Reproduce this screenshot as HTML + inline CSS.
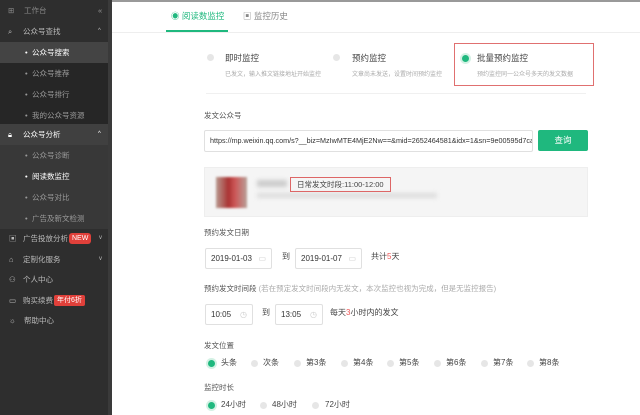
<!DOCTYPE html>
<html><head><meta charset="utf-8"><style>
*{margin:0;padding:0;box-sizing:border-box}
body{width:640px;height:415px;overflow:hidden;background:#fff;font-family:"Liberation Sans","Noto Sans CJK SC",sans-serif;position:relative}
.sb{position:absolute;left:0;top:0;width:108px;height:415px;background:#2e2e2e}
.sb2{position:absolute;left:108px;top:0;width:4px;height:415px;background:#3a3a3a}
.it{position:absolute;left:0;width:108px;height:21px;line-height:21px;font-size:7.5px;color:#bbb}
.sub{background:#262626}
.t{position:absolute;color:#444;white-space:nowrap}
.a{position:absolute}
.r{position:absolute;width:7px;height:7px;border-radius:50%;background:#e6e6e6}
.r.on{background:#1fb87e;box-shadow:0 0 0 2px #d3f1e4}
.in{position:absolute;border:1px solid #e0e0e0;border-radius:2px;font-size:8px;color:#333;background:#fff}
</style></head><body>
<div class="sb"></div><div class="sb2"></div>
<div class="it" style="top:0"><span class="a" style="left:8px;color:#888">⊞</span><span class="a" style="left:24px;color:#888">工作台</span><span class="a" style="left:98px;color:#999">«</span></div>
<div class="it" style="top:21px"><span class="a" style="left:8px">⌕</span><span class="a" style="left:23px">公众号查找</span><span class="a" style="left:98px;font-size:6px">^</span></div>
<div class="it sub" style="top:42px;background:#444;color:#fff"><span class="a" style="left:25px">•</span><span class="a" style="left:32px">公众号搜索</span></div>
<div class="it sub" style="top:63px;color:#999"><span class="a" style="left:25px">•</span><span class="a" style="left:32px">公众号推荐</span></div>
<div class="it sub" style="top:84px;color:#999"><span class="a" style="left:25px">•</span><span class="a" style="left:32px">公众号排行</span></div>
<div class="it sub" style="top:105px;color:#999"><span class="a" style="left:25px">•</span><span class="a" style="left:32px">我的公众号资源</span></div>
<div class="it" style="top:124px;height:21px;background:#404040;color:#fff"><span class="a" style="left:8px">🔒︎</span><span class="a" style="left:23px">公众号分析</span><span class="a" style="left:98px;font-size:6px">^</span></div>
<div class="it" style="top:145px;background:#383838;color:#999"><span class="a" style="left:25px">•</span><span class="a" style="left:32px">公众号诊断</span></div>
<div class="it" style="top:166px;background:#383838;color:#fff"><span class="a" style="left:25px">•</span><span class="a" style="left:32px">阅读数监控</span></div>
<div class="it" style="top:187px;background:#383838;color:#999"><span class="a" style="left:25px">•</span><span class="a" style="left:32px">公众号对比</span></div>
<div class="it" style="top:208px;background:#383838;color:#999"><span class="a" style="left:25px">•</span><span class="a" style="left:32px">广告及新文检测</span></div>
<div class="it" style="top:228px"><span class="a" style="left:9px">▣</span><span class="a" style="left:23px">广告投放分析</span><span class="a" style="left:69px;top:5px;height:11px;line-height:11px;padding:0 3px;background:#e0403a;color:#fff;border-radius:3px;font-size:7px">NEW</span><span class="a" style="left:99px;font-size:6px">v</span></div>
<div class="it" style="top:249px"><span class="a" style="left:9px">⌂</span><span class="a" style="left:23px">定制化服务</span><span class="a" style="left:99px;font-size:6px">v</span></div>
<div class="it" style="top:269px"><span class="a" style="left:9px">⚇</span><span class="a" style="left:23px">个人中心</span></div>
<div class="it" style="top:290px"><span class="a" style="left:9px">▭</span><span class="a" style="left:23px">购买续费</span><span class="a" style="left:54px;top:5px;height:11px;line-height:11px;padding:0 3px;background:#e0403a;color:#fff;border-radius:2px;font-size:7px">年付6折</span></div>
<div class="it" style="top:310px"><span class="a" style="left:9px">☼</span><span class="a" style="left:24px">帮助中心</span></div>

<div class="a" style="left:112px;top:0;width:528px;height:2px;background:#999"></div>
<div class="a" style="left:112px;top:32px;width:528px;height:1px;background:#eee"></div>
<div class="t" style="left:171px;top:10px;font-size:8.5px;color:#1fb87e">◉ 阅读数监控</div>
<div class="a" style="left:166px;top:30px;width:62px;height:2px;background:#1fb87e"></div>
<div class="t" style="left:243px;top:10px;font-size:8.5px;color:#888">▣ 监控历史</div>

<div class="r" style="left:207px;top:54px"></div>
<div class="t" style="left:225px;top:52px;font-size:8.5px">即时监控</div>
<div class="t" style="left:225px;top:69px;font-size:6px;color:#aaa">已发文，输入推文链接地址开始监控</div>
<div class="r" style="left:333px;top:54px"></div>
<div class="t" style="left:352px;top:52px;font-size:8.5px">预约监控</div>
<div class="t" style="left:352px;top:69px;font-size:6px;color:#aaa">文章尚未发送，设置时间预约监控</div>
<div class="a" style="left:454px;top:43px;width:140px;height:43px;border:1px solid #e07070"></div>
<div class="r on" style="left:462px;top:55px"></div>
<div class="t" style="left:477px;top:52px;font-size:8.5px">批量预约监控</div>
<div class="t" style="left:477px;top:69px;font-size:6px;color:#aaa">预约监控同一公众号多天的发文数据</div>
<div class="a" style="left:206px;top:93px;width:380px;height:1px;background:#f0f0f0"></div>

<div class="t" style="left:204px;top:110px;font-size:7.5px;color:#555">发文公众号</div>
<div class="in" style="left:204px;top:130px;width:329px;height:22px;line-height:20px;padding-left:5px;font-size:7.2px;white-space:nowrap;overflow:hidden">https://mp.weixin.qq.com/s?__biz=MzIwMTE4MjE2Nw==&amp;mid=2652464581&amp;idx=1&amp;sn=9e00595d7ca</div>
<div class="a" style="left:538px;top:130px;width:50px;height:21px;background:#1fb87e;border-radius:2px;color:#fff;font-size:8.5px;text-align:center;line-height:21px">查询</div>
<div class="a" style="left:204px;top:167px;width:384px;height:50px;background:#f5f5f5;border:1px solid #eee"></div>
<div class="a" style="left:216px;top:177px;width:31px;height:31px;background:linear-gradient(90deg,#b89a90,#a33 40%,#c55 60%,#b8a098);filter:blur(1px)"></div>
<div class="a" style="left:257px;top:180px;width:30px;height:7px;background:#ccc;filter:blur(2px)"></div>
<div class="a" style="left:257px;top:193px;width:180px;height:5px;background:#ddd;filter:blur(2px)"></div>
<div class="a" style="left:290px;top:177px;width:101px;height:15px;border:1px solid #d66;font-size:7.5px;color:#444;line-height:13px;padding-left:6px">日常发文时段:11:00-12:00</div>

<div class="t" style="left:204px;top:227px;font-size:7.5px;color:#555">预约发文日期</div>
<div class="in" style="left:205px;top:248px;width:67px;height:21px;line-height:19px;padding-left:5px">2019-01-03 <span style="color:#ccc;float:right;margin-right:5px">▭</span></div>
<div class="t" style="left:282px;top:251px;font-size:8px">到</div>
<div class="in" style="left:295px;top:248px;width:67px;height:21px;line-height:19px;padding-left:5px">2019-01-07 <span style="color:#ccc;float:right;margin-right:5px">▭</span></div>
<div class="t" style="left:371px;top:251px;font-size:8px">共计<span style="color:#e55">5</span>天</div>

<div class="t" style="left:204px;top:283px;font-size:7.5px;color:#555">预约发文时间段 <span style="color:#aaa">(若在预定发文时间段内无发文，本次监控也视为完成，但是无监控报告)</span></div>
<div class="in" style="left:205px;top:304px;width:48px;height:21px;line-height:19px;padding-left:5px">10:05 <span style="color:#ccc;float:right;margin-right:5px">◷</span></div>
<div class="t" style="left:262px;top:307px;font-size:8px">到</div>
<div class="in" style="left:275px;top:304px;width:48px;height:21px;line-height:19px;padding-left:5px">13:05 <span style="color:#ccc;float:right;margin-right:5px">◷</span></div>
<div class="t" style="left:330px;top:307px;font-size:8px">每天<span style="color:#e55">3</span>小时内的发文</div>

<div class="t" style="left:204px;top:340px;font-size:7.5px;color:#555">发文位置</div>
<div class="r on" style="left:208px;top:360px"></div><div class="t" style="left:221px;top:357px;font-size:8px">头条</div>
<div class="r" style="left:251px;top:360px"></div><div class="t" style="left:263px;top:357px;font-size:8px">次条</div>
<div class="r" style="left:294px;top:360px"></div><div class="t" style="left:306px;top:357px;font-size:8px">第3条</div>
<div class="r" style="left:341px;top:360px"></div><div class="t" style="left:353px;top:357px;font-size:8px">第4条</div>
<div class="r" style="left:387px;top:360px"></div><div class="t" style="left:399px;top:357px;font-size:8px">第5条</div>
<div class="r" style="left:434px;top:360px"></div><div class="t" style="left:446px;top:357px;font-size:8px">第6条</div>
<div class="r" style="left:481px;top:360px"></div><div class="t" style="left:493px;top:357px;font-size:8px">第7条</div>
<div class="r" style="left:527px;top:360px"></div><div class="t" style="left:539px;top:357px;font-size:8px">第8条</div>

<div class="t" style="left:204px;top:382px;font-size:7.5px;color:#555">监控时长</div>
<div class="r on" style="left:208px;top:402px"></div><div class="t" style="left:221px;top:399px;font-size:8px">24小时</div>
<div class="r" style="left:260px;top:402px"></div><div class="t" style="left:272px;top:399px;font-size:8px">48小时</div>
<div class="r" style="left:312px;top:402px"></div><div class="t" style="left:325px;top:399px;font-size:8px">72小时</div>
</body></html>
